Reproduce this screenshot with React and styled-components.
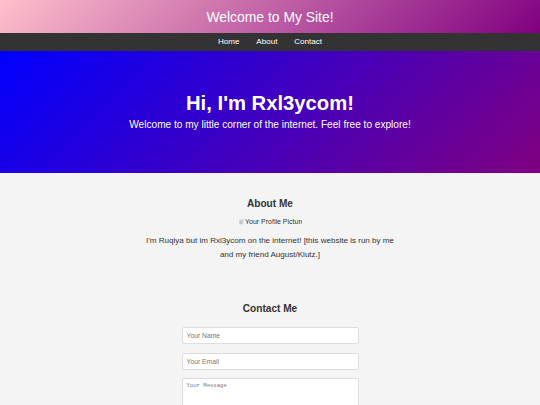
import React from "react";
import styled, { createGlobalStyle } from "styled-components";

const Global = createGlobalStyle`
  html, body { margin: 0; padding: 0; }
  body {
    font-family: "Liberation Sans", Arial, sans-serif;
    background: #f4f4f4;
    color: #333;
    overflow: hidden;
  }
`;

const Header = styled.header`
  background: linear-gradient(135deg, #ffc0cb, #800080);
  padding: 8.5px 0;
  text-align: center;
`;

const SiteTitle = styled.h1`
  margin: 0;
  font-size: 13.9px;
  line-height: 16px;
  font-weight: normal;
  color: #fff;
`;

const Nav = styled.nav`
  background: #333;
  height: 18px;
  display: flex;
  justify-content: center;
  align-items: center;
`;

const NavLink = styled.a`
  color: #fff;
  text-decoration: none;
  font-size: 8.1px;
  line-height: 18px;
  margin: 0 8.4px;
`;

const Hero = styled.section`
  background: linear-gradient(135deg, #0000ff, #800080);
  padding: 41px 20px 42px;
  text-align: center;
  color: #fff;
`;

const HeroTitle = styled.h2`
  margin: 0 0 4px;
  font-size: 20.25px;
  line-height: 23px;
  font-weight: bold;
`;

const HeroText = styled.p`
  margin: 0;
  font-size: 10.1px;
  line-height: 12px;
`;

const Section = styled.section`
  max-width: 253px;
  margin: 0 auto;
  padding-top: ${(p) => p.$top}px;
  display: flex;
  flex-direction: column;
  align-items: center;
  text-align: center;
`;

const SectionTitle = styled.h2`
  margin: 0;
  font-size: 10.1px;
  line-height: 12px;
  font-weight: bold;
  color: #333;
`;

const ProfilePic = styled.div`
  margin-top: 8px;
  width: 63px;
  height: 8px;
  overflow: hidden;
  white-space: nowrap;
  display: flex;
  align-items: center;
  font-size: 7px;
  line-height: 8px;
  color: #333;
`;

const BrokenIcon = styled.svg`
  flex: none;
  width: 6px;
  height: 6px;
  margin-right: 0.5px;
`;

const Bio = styled.p`
  margin: 7.5px 0 0;
  font-size: 8.05px;
  line-height: 14.3px;
  color: #333;
`;

const Form = styled.form`
  margin-top: 12px;
  width: 177px;
  display: flex;
  flex-direction: column;
  gap: 8.5px;
`;

const Input = styled.input`
  box-sizing: border-box;
  width: 100%;
  height: 17px;
  padding: 0 4px;
  border: 1px solid #ddd;
  border-radius: 2px;
  background: #fff;
  font-family: "Liberation Sans", Arial, sans-serif;
  font-size: 6.75px;
  color: #333;
  outline: none;
  &::placeholder { color: #757575; }
`;

const TextArea = styled.textarea`
  box-sizing: border-box;
  width: 100%;
  height: 60px;
  padding: 3px 4px;
  border: 1px solid #ddd;
  border-radius: 2px;
  background: #fff;
  font-family: "Liberation Mono", "Courier New", monospace;
  font-size: 5.6px;
  line-height: 7px;
  resize: none;
  outline: none;
  &::placeholder { color: #757575; }
`;

export default function App() {
  return (
    <>
      <Global />
      <Header>
        <SiteTitle>Welcome to My Site!</SiteTitle>
      </Header>
      <Nav>
        <NavLink href="#home">Home</NavLink>
        <NavLink href="#about">About</NavLink>
        <NavLink href="#contact">Contact</NavLink>
      </Nav>
      <Hero>
        <HeroTitle>Hi, I'm Rxl3ycom!</HeroTitle>
        <HeroText>Welcome to my little corner of the internet. Feel free to explore!</HeroText>
      </Hero>
      <main>
        <Section $top={25}>
          <SectionTitle>About Me</SectionTitle>
          <ProfilePic role="img" aria-label="Your Profile Picture">
            <BrokenIcon viewBox="0 0 16 16">
              <path d="M2 3h9l-2 4 2 3-2 3H2z" fill="#e8e8e8" stroke="#8a8a8a" strokeWidth="1" />
              <path d="M4 11l2-3 2 2" fill="none" stroke="#4a9a4a" strokeWidth="1.2" />
              <circle cx="5" cy="6" r="1" fill="#5a8ad0" />
            </BrokenIcon>
            Your Profile Picture
          </ProfilePic>
          <Bio>
            I'm Ruqiya but im Rxl3ycom on the internet! [this website is run by me and my friend August/Klutz.]
          </Bio>
        </Section>
        <Section $top={41}>
          <SectionTitle>Contact Me</SectionTitle>
          <Form onSubmit={(e) => e.preventDefault()}>
            <Input type="text" placeholder="Your Name" />
            <Input type="email" placeholder="Your Email" />
            <TextArea placeholder="Your Message" />
          </Form>
        </Section>
      </main>
    </>
  );
}
